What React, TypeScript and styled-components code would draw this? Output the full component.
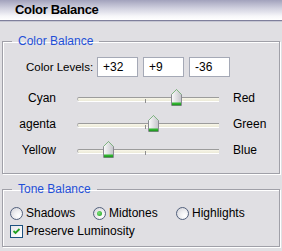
import React from 'react';
import styled, { createGlobalStyle } from 'styled-components';

const GlobalStyle = createGlobalStyle`
  html, body {
    margin: 0;
    padding: 0;
  }
  body {
    background: #e0dfe3;
    font-family: "Liberation Sans", Arial, sans-serif;
    font-size: 12px;
    color: #000;
  }
`;

const Window = styled.div`
  width: 282px;
  height: 251px;
  background: #e0dfe3;
  display: flex;
  flex-direction: column;
  overflow: hidden;
`;

const TitleBar = styled.div`
  flex: none;
  height: 21px;
  box-sizing: border-box;
  padding-left: 15px;
  background: linear-gradient(to bottom, #a2a2bc 0%, #cfcfde 40%, #f6f6f9 80%, #ffffff 100%);
  border-bottom: 1px solid #7f7f9c;
  box-shadow: 0 1px 0 #c6c6d2;
  font-weight: bold;
  font-size: 13px;
  letter-spacing: -0.3px;
  line-height: 20px;
`;

const Group = styled.fieldset<{ $gap: number; $padTop: number; $padBottom: number }>`
  flex: none;
  width: 278px;
  box-sizing: border-box;
  margin: ${(p) => p.$gap}px 0 0 2px;
  padding: ${(p) => p.$padTop}px 0 ${(p) => p.$padBottom}px 0;
  min-width: 0;
  border: 1px solid #a0a0a8;
  box-shadow: 1px 1px 0 #ffffff, inset 1px 1px 0 #ffffff;
`;

const Legend = styled.legend`
  margin-left: 9px;
  padding: 0 6px;
  color: #1f4fd8;
  font-size: 12px;
  line-height: 14px;
`;

const LevelsRow = styled.div`
  display: flex;
  align-items: center;
  height: 20px;
  padding-left: 23px;
  gap: 5px;
`;

const LevelsLabel = styled.span`
  width: 66px;
  white-space: nowrap;
  font-size: 11.5px;
`;

const LevelBox = styled.input`
  width: 41px;
  height: 20px;
  box-sizing: border-box;
  margin: 0;
  padding: 0 0 0 5px;
  border: 1px solid #a5a9b6;
  background: #fff;
  font-family: "Liberation Sans", Arial, sans-serif;
  font-size: 12px;
  color: #000;
  outline: none;
`;

const SliderList = styled.div`
  display: flex;
  flex-direction: column;
  margin-top: 9px;
`;

const SliderRow = styled.div`
  display: flex;
  align-items: flex-start;
  height: 26px;
  padding-left: 13px;
`;

const SideLabel = styled.span<{ $side: 'left' | 'right' }>`
  display: flex;
  justify-content: ${(p) => (p.$side === 'left' ? 'flex-end' : 'flex-start')};
  width: ${(p) => (p.$side === 'left' ? '40px' : 'auto')};
  margin: ${(p) => (p.$side === 'left' ? '0 21px 0 0' : '0 0 0 14px')};
  white-space: nowrap;
  line-height: 14px;
  padding-top: 5px;
`;

const TrackArea = styled.div`
  position: relative;
  width: 142px;
  height: 26px;
  flex: none;
`;

const Track = styled.div`
  margin-top: 11px;
  height: 3px;
  border-top: 1px solid #9c9c9c;
  border-left: 1px solid #b0b0b0;
  border-radius: 2px 0 0 2px;
  background: linear-gradient(to bottom, #f7f5e8, #ecead8);
  box-shadow: 0 1px 0 #ffffff;
`;

const CenterTick = styled.div`
  position: absolute;
  left: 68px;
  top: 13px;
  width: 1px;
  height: 4px;
  background: #8e8e8e;
`;

const ThumbHolder = styled.div`
  position: absolute;
  top: 3px;
  width: 11px;
  height: 17px;
  line-height: 0;
`;

const ToneRow = styled.div`
  display: grid;
  grid-template-columns: 83px 83px 83px;
  align-items: center;
  height: 18px;
  padding-left: 7px;
`;

const CheckRow = styled.div`
  display: flex;
  align-items: center;
  height: 18px;
  padding-left: 7px;
`;

const Choice = styled.label`
  display: flex;
  align-items: center;
  gap: 3px;
  white-space: nowrap;
`;

const Radio = styled.span<{ $checked: boolean }>`
  position: relative;
  width: 13px;
  height: 13px;
  box-sizing: border-box;
  border-radius: 50%;
  border: 1px solid #52607c;
  background: radial-gradient(circle at 70% 70%, #ffffff 0%, #f0f0f2 40%, #cfcfd6 100%);
  flex: none;

  &::after {
    content: '';
    display: ${(p) => (p.$checked ? 'block' : 'none')};
    position: absolute;
    left: 3px;
    top: 3px;
    width: 5px;
    height: 5px;
    border-radius: 50%;
    background: radial-gradient(circle at 40% 40%, #7ce27c, #1c9c1c);
  }
`;

const CheckBox = styled.span`
  width: 13px;
  height: 13px;
  box-sizing: border-box;
  border: 1px solid #1c5180;
  background: linear-gradient(135deg, #e6e6ea, #ffffff);
  flex: none;
  line-height: 0;
`;

const Thumb = () => (
  <svg width="11" height="17" viewBox="0 0 11 17">
    <defs>
      <linearGradient id="thumbFill" x1="0" y1="0" x2="1" y2="0">
        <stop offset="0" stopColor="#fbfbfb" />
        <stop offset="1" stopColor="#c4c4ca" />
      </linearGradient>
    </defs>
    <path d="M5.5 0.5 L10.5 5.5 V16.5 H0.5 V5.5 Z" fill="url(#thumbFill)" stroke="#8a8a92" />
    <path d="M5.5 0.5 L10.5 5.5 M5.5 0.5 L0.5 5.5" stroke="#7cbf7c" strokeWidth="0.8" />
    <rect x="1" y="13.5" width="9" height="2.5" fill="#2fb42f" />
    <rect x="1" y="15.5" width="9" height="0.8" fill="#1a8a1a" />
  </svg>
);

// the magenta label is clipped in the dialog, only "agenta" shows
const sliders = [
  { left: 'Cyan', right: 'Red', pos: 0.704 },
  { left: 'agenta', right: 'Green', pos: 0.542 },
  { left: 'Yellow', right: 'Blue', pos: 0.225 },
];

const levels = ['+32', '+9', '-36'];
const tones = [
  { name: 'Shadows', checked: false },
  { name: 'Midtones', checked: true },
  { name: 'Highlights', checked: false },
];

function App() {
  return (
    <Window>
      <GlobalStyle />
      <TitleBar>Color Balance</TitleBar>

      <Group $gap={13} $padTop={9} $padBottom={9}>
        <Legend>Color Balance</Legend>
        <LevelsRow>
          <LevelsLabel>Color Levels:</LevelsLabel>
          {levels.map((v) => (
            <LevelBox key={v} defaultValue={v} readOnly />
          ))}
        </LevelsRow>
        <SliderList>
          {sliders.map((s) => (
            <SliderRow key={s.left}>
              <SideLabel $side="left">{s.left}</SideLabel>
              <TrackArea>
                <Track />
                <CenterTick />
                <ThumbHolder style={{ left: Math.round(s.pos * 142 - 5.5) }}>
                  <Thumb />
                </ThumbHolder>
              </TrackArea>
              <SideLabel $side="right">{s.right}</SideLabel>
            </SliderRow>
          ))}
        </SliderList>
      </Group>

      <Group $gap={8} $padTop={8} $padBottom={6}>
        <Legend>Tone Balance</Legend>
        <ToneRow>
          {tones.map((t) => (
            <Choice key={t.name}>
              <Radio $checked={t.checked} />
              {t.name}
            </Choice>
          ))}
        </ToneRow>
        <CheckRow>
          <Choice>
            <CheckBox>
              <svg width="11" height="11" viewBox="0 0 11 11">
                <path d="M2.5 5 L4.5 7 L8.5 3" fill="none" stroke="#21a121" strokeWidth="1.8" />
              </svg>
            </CheckBox>
            Preserve Luminosity
          </Choice>
        </CheckRow>
      </Group>
    </Window>
  );
}

export default App;
